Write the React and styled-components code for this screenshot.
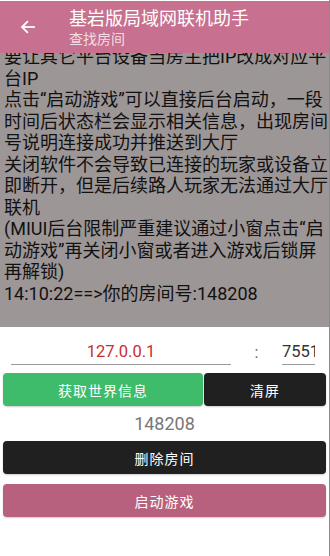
import React from "react";
import styled, { createGlobalStyle } from "styled-components";

const GlobalStyle = createGlobalStyle`
    html, body {
        margin: 0;
        padding: 0;
        background: #FFFFFF;
    }

    body {
        font-family: Roboto, "Noto Sans CJK SC", sans-serif;
    }
`;

const logLines = [
    "要让其它平台设备当房主把IP改成对应平台IP",
    "点击“启动游戏”可以直接后台启动，一段时间后状态栏会显示相关信息，出现房间号说明连接成功并推送到大厅",
    "关闭软件不会导致已连接的玩家或设备立即断开，但是后续路人玩家无法通过大厅联机",
    "(MIUI后台限制严重建议通过小窗点击“启动游戏”再关闭小窗或者进入游戏后锁屏再解锁)",
    "14:10:22==>你的房间号:148208"
];

export default function App() {
    return (
        <>
            <GlobalStyle />
            <Screen>
                <AppBar>
                    <BackButton>
                        <svg width="18" height="18" viewBox="0 0 24 24" fill="none" stroke="#FFFFFF" strokeWidth="2.4" strokeLinecap="square">
                            <path d="M20 12H5" />
                            <path d="M11 5l-7 7 7 7" />
                        </svg>
                    </BackButton>
                    <Titles>
                        <Title>基岩版局域网联机助手</Title>
                        <Subtitle>查找房间</Subtitle>
                    </Titles>
                </AppBar>

                <LogPanel>
                    <LogText>
                        {logLines.map((line, index) => <div key={index}>{line}</div>)}
                    </LogText>
                </LogPanel>

                <AddressRow>
                    <Field grow={1}>127.0.0.1</Field>
                    <Colon>:</Colon>
                    <Field width="33px" port>7551</Field>
                </AddressRow>

                <ButtonRow>
                    <Button tone="green" flex="0 0 200px">获取世界信息</Button>
                    <Button tone="dark" flex="1">清屏</Button>
                </ButtonRow>

                <RoomNumber>148208</RoomNumber>

                <Button tone="dark">删除房间</Button>
                <Spacer />
                <Button tone="pink">启动游戏</Button>
            </Screen>
        </>
    );
};

// ------------------------------>>

const Screen = styled.main`

    width: 330px;
    height: 556px;
    display: flex;
    flex-direction: column;
    box-sizing: border-box;
    padding: 0 3px 0 3px;
    border-right: 1px solid #8a8a8a;
    background: #FFFFFF;
    overflow: hidden;
`;

const AppBar = styled.header`

    height: 52px;
    margin: 1px -3px 0 -3px;
    display: flex;
    align-items: center;
    background-color: #C7708F;
    color: #FFFFFF;
    flex-shrink: 0;
`;

const BackButton = styled.div`

    width: 69px;
    height: 100%;
    display: flex;
    align-items: center;
    padding-left: 19px;
    box-sizing: border-box;
`;

const Titles = styled.div`

    display: flex;
    flex-direction: column;
    justify-content: center;
    padding-bottom: 2px;
`;

const Title = styled.h1`

    margin: 0;
    font-size: 18px;
    font-weight: 400;
    line-height: 24px;
    font-family: "Noto Sans CJK SC", sans-serif;
`;

const Subtitle = styled.h2`

    margin: 0;
    font-size: 14px;
    font-weight: 400;
    line-height: 18px;
    color: rgba(255, 255, 255, 0.78);
    font-family: "Noto Sans CJK SC", sans-serif;
`;

// ------------------------------>>

const LogPanel = styled.section`

    height: 274px;
    margin: 0 -3px 0 -3px;
    background-color: #9D9696;
    overflow: hidden;
    display: flex;
    flex-direction: column;
    justify-content: flex-end;
    flex-shrink: 0;
`;

const LogText = styled.div`

    padding: 0 1px 23px 4px;
    font-size: 18px;
    line-height: 21.5px;
    color: #111111;
    font-family: Roboto, "Noto Sans CJK SC", sans-serif;
    word-break: break-all;
`;

// ------------------------------>>

const AddressRow = styled.div`

    height: 46px;
    display: flex;
    align-items: center;
    padding: 0 11px 0 8px;
`;

const Field = styled.div`

    flex: ${props => props.grow || "none"};
    width: ${props => props.width || "auto"};
    text-align: ${props => props.port ? "left" : "center"};
    font-size: 16.5px;
    line-height: 24px;
    padding-top: 4px;
    color: ${props => props.port ? "#333333" : "#C62F2F"};
    border-bottom: 1px solid #9a9a9a;
    white-space: nowrap;
    overflow: hidden;
`;

const Colon = styled.span`

    width: 51px;
    text-align: center;
    font-size: 16px;
    color: #666666;
    padding-top: 4px;
`;

const ButtonRow = styled.div`

    display: flex;
    gap: 1px;
`;

const tones = {
    green: "#3FBB6C",
    dark: "#202020",
    pink: "#B8617E"
};

const Button = styled.button`

    flex: ${props => props.flex || "none"};
    height: 33px;
    border: none;
    border-radius: 4px;
    background-color: ${props => tones[props.tone]};
    color: #FFFFFF;
    font-size: 14px;
    letter-spacing: 1px;
    font-family: "Noto Sans CJK SC", sans-serif;
    box-shadow: 0 1px 2px rgba(0, 0, 0, 0.2);
    padding: 0;
`;

const RoomNumber = styled.div`

    height: 35px;
    display: flex;
    align-items: center;
    justify-content: center;
    font-size: 18px;
    color: #777777;
`;

const Spacer = styled.div`

    height: 10px;
    flex-shrink: 0;
`;
